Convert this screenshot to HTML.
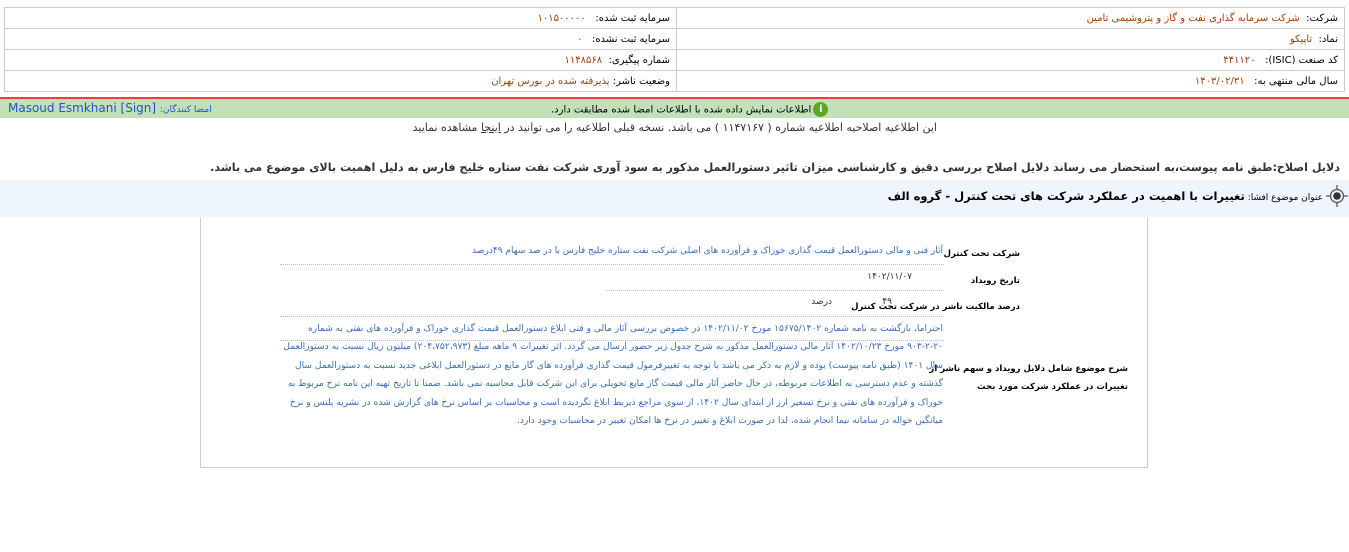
<!DOCTYPE html>
<html><head><meta charset="utf-8"><style>
*{margin:0;padding:0;box-sizing:border-box}
body{width:1349px;height:552px;background:#fff;font-family:"DejaVu Sans","Liberation Sans",sans-serif;font-size:10px;color:#000;position:relative;overflow:hidden;direction:rtl}
.a{position:absolute;white-space:nowrap}
.tb{position:absolute;left:4px;top:7px;width:1341px;height:85px;border:1px solid #ccc}
.cell{position:absolute;height:21px;border-bottom:1px solid #ccc;padding-right:6px;line-height:21px}
.v{color:#a0400a}
.lbl{font-weight:bold;font-size:8.5px}
.val{color:#3a6fb0}
.dot{position:absolute;border-bottom:1px dotted #bbb}
</style></head><body>
<div class="tb">
 <div style="position:absolute;left:671px;top:0;width:1px;height:84px;background:#ccc"></div>
 <div class="cell" style="right:0;width:668px;top:0">شرکت:&nbsp; <span class="v">شرکت سرمایه گذاری نفت و گاز و پتروشیمی تامین</span></div>
 <div class="cell" style="right:0;width:668px;top:21px">نماد:&nbsp; <span class="v">تاپیکو</span></div>
 <div class="cell" style="right:0;width:668px;top:42px">کد صنعت (ISIC):&nbsp;&nbsp; <span class="v">۴۴۱۱۲۰</span></div>
 <div class="cell" style="right:0;width:668px;top:63px;border:0">سال مالی منتهی به:&nbsp;&nbsp; <span class="v">۱۴۰۳/۰۲/۳۱</span></div>
 <div class="cell" style="left:0;width:671px;top:0">سرمایه ثبت شده:&nbsp;&nbsp; <span class="v">۱۰۱۵۰۰۰۰۰</span></div>
 <div class="cell" style="left:0;width:671px;top:21px">سرمایه ثبت نشده:&nbsp;&nbsp; <span class="v">۰</span></div>
 <div class="cell" style="left:0;width:671px;top:42px">شماره پیگیری:&nbsp; <span class="v">۱۱۴۸۵۶۸</span></div>
 <div class="cell" style="left:0;width:671px;top:63px;border:0">وضعیت ناشر: <span class="v">پذیرفته شده در بورس تهران</span></div>
</div>
<div style="position:absolute;left:0;top:97px;width:1349px;height:2px;background:#e84040"></div>
<div style="position:absolute;left:0;top:99px;width:1349px;height:19px;background:#c3e0b8"></div>
<div class="a" style="left:8px;top:101px;font-size:12px;color:#2255cc;direction:ltr">Masoud Esmkhani [Sign] <span style="font-size:9px">:امضا کنندگان</span></div>
<div class="a" style="left:551px;top:102px;font-size:10px">
 <span style="display:inline-block;width:15px;height:15px;border-radius:50%;background:#5aa823;color:#fff;text-align:center;font-weight:bold;line-height:15px;vertical-align:middle;margin-left:2px">i</span>اطلاعات نمایش داده شده با اطلاعات امضا شده مطابقت دارد.</div>
<div class="a" style="right:412px;top:121px;font-size:11px;color:#333">این اطلاعیه اصلاحیه اطلاعیه شماره ( ۱۱۴۷۱۶۷ ) می باشد. نسخه قبلی اطلاعیه را می توانید در <u>اینجا</u> مشاهده نمایید</div>
<div class="a" style="right:9px;top:161px;font-size:11.15px;font-weight:bold;color:#333">دلایل اصلاح:طبق نامه پیوست،به استحضار می رساند دلایل اصلاح بررسی دقیق و کارشناسی میزان تاثیر دستورالعمل مذکور به سود آوری شرکت نفت ستاره خلیج فارس به دلیل اهمیت بالای موضوع می باشد.</div>
<div style="position:absolute;left:0;top:180px;width:1349px;height:37px;background:#eef5fc"></div>
<svg style="position:absolute;left:1326px;top:185px" width="22" height="22" viewBox="0 0 22 22"><circle cx="11" cy="11" r="6.5" fill="none" stroke="#555" stroke-width="1.3"/><circle cx="11" cy="11" r="3.8" fill="#333"/><path d="M11 0v4M11 18v4M0 11h4M18 11h4" stroke="#555" stroke-width="1.3"/></svg>
<div class="a" style="right:26px;top:189px;font-size:9px">عنوان موضوع افشا: <span style="font-size:11.5px;font-weight:bold">تغییرات با اهمیت در عملکرد شرکت های تحت کنترل - گروه الف</span></div>
<div style="position:absolute;left:200px;top:218px;width:948px;height:250px;border:1px solid #ccc;border-top:0"></div>
<div class="a lbl" style="right:329px;top:249px">شرکت تحت کنترل</div>
<div class="a val" style="right:406px;top:246px;font-size:9px">آثار فنی و مالی دستورالعمل قیمت گذاری خوراک و فرآورده های اصلی شرکت نفت ستاره خلیج فارس با در صد سهام ۴۹درصد</div>
<div class="dot" style="left:280px;width:664px;top:264px"></div>
<div class="a lbl" style="right:329px;top:276px">تاریخ رویداد</div>
<div class="a" style="right:437px;top:272px;color:#333;font-size:9px">۱۴۰۲/۱۱/۰۷</div>
<div class="dot" style="left:607px;width:337px;top:290px"></div>
<div class="a lbl" style="right:329px;top:302px">درصد مالکیت ناشر در شرکت تحت کنترل</div>
<div class="a" style="right:457px;top:297px;color:#333;font-size:9px">۴۹</div>
<div class="a" style="right:517px;top:297px;color:#333;font-size:9px">درصد</div>
<div class="dot" style="left:280px;width:664px;top:316px"></div>
<div class="a lbl" style="right:221px;top:360px;line-height:18px;text-align:right">شرح موضوع شامل دلایل رویداد و سهم ناشر از<br>تغییرات در عملکرد شرکت مورد بحث</div>
<div class="a val" style="right:406px;top:320px;line-height:18.4px;text-align:right;font-size:9.1px">احتراما، بازگشت به نامه شماره ۱۵۶۷۵/۱۴۰۲ مورخ ۱۴۰۲/۱۱/۰۲ در خصوص بررسی آثار مالی و فنی ابلاغ دستورالعمل قیمت گذاری خوراک و فرآورده های نفتی به شماره<br>۹۰۳-۲-۲۰ مورخ ۱۴۰۲/۱۰/۲۳ آثار مالی دستورالعمل مذکور به شرح جدول زیر حضور ارسال می گردد. اثر تغییرات ۹ ماهه مبلغ (۲۰۴،۷۵۲،۹۷۳) میلیون ریال نسبت به دستورالعمل<br>سال ۱۴۰۱ (طبق نامه پیوست) بوده و لازم به ذکر می باشد با توجه به تغییرفرمول قیمت گذاری فرآورده های گاز مایع در دستورالعمل ابلاغی جدید نسبت به دستورالعمل سال<br>گذشته و عدم دسترسی به اطلاعات مربوطه، در حال حاضر آثار مالی قیمت گاز مایع تحویلی برای این شرکت قابل محاسبه نمی باشد. ضمنا تا تاریخ تهیه این نامه نرخ مربوط به<br>خوراک و فرآورده های نفتی و نرخ تسعیر ارز از ابتدای سال ۱۴۰۲، از سوی مراجع ذیربط ابلاغ نگردیده است و محاسبات بر اساس نرخ های گزارش شده در نشریه پلتس و نرخ<br>میانگین حواله در سامانه نیما انجام شده، لذا در صورت ابلاغ و تغییر در نرخ ها امکان تغییر در محاسبات وجود دارد.</div>
<div class="dot" style="left:280px;width:664px;top:340px"></div>
</body></html>
